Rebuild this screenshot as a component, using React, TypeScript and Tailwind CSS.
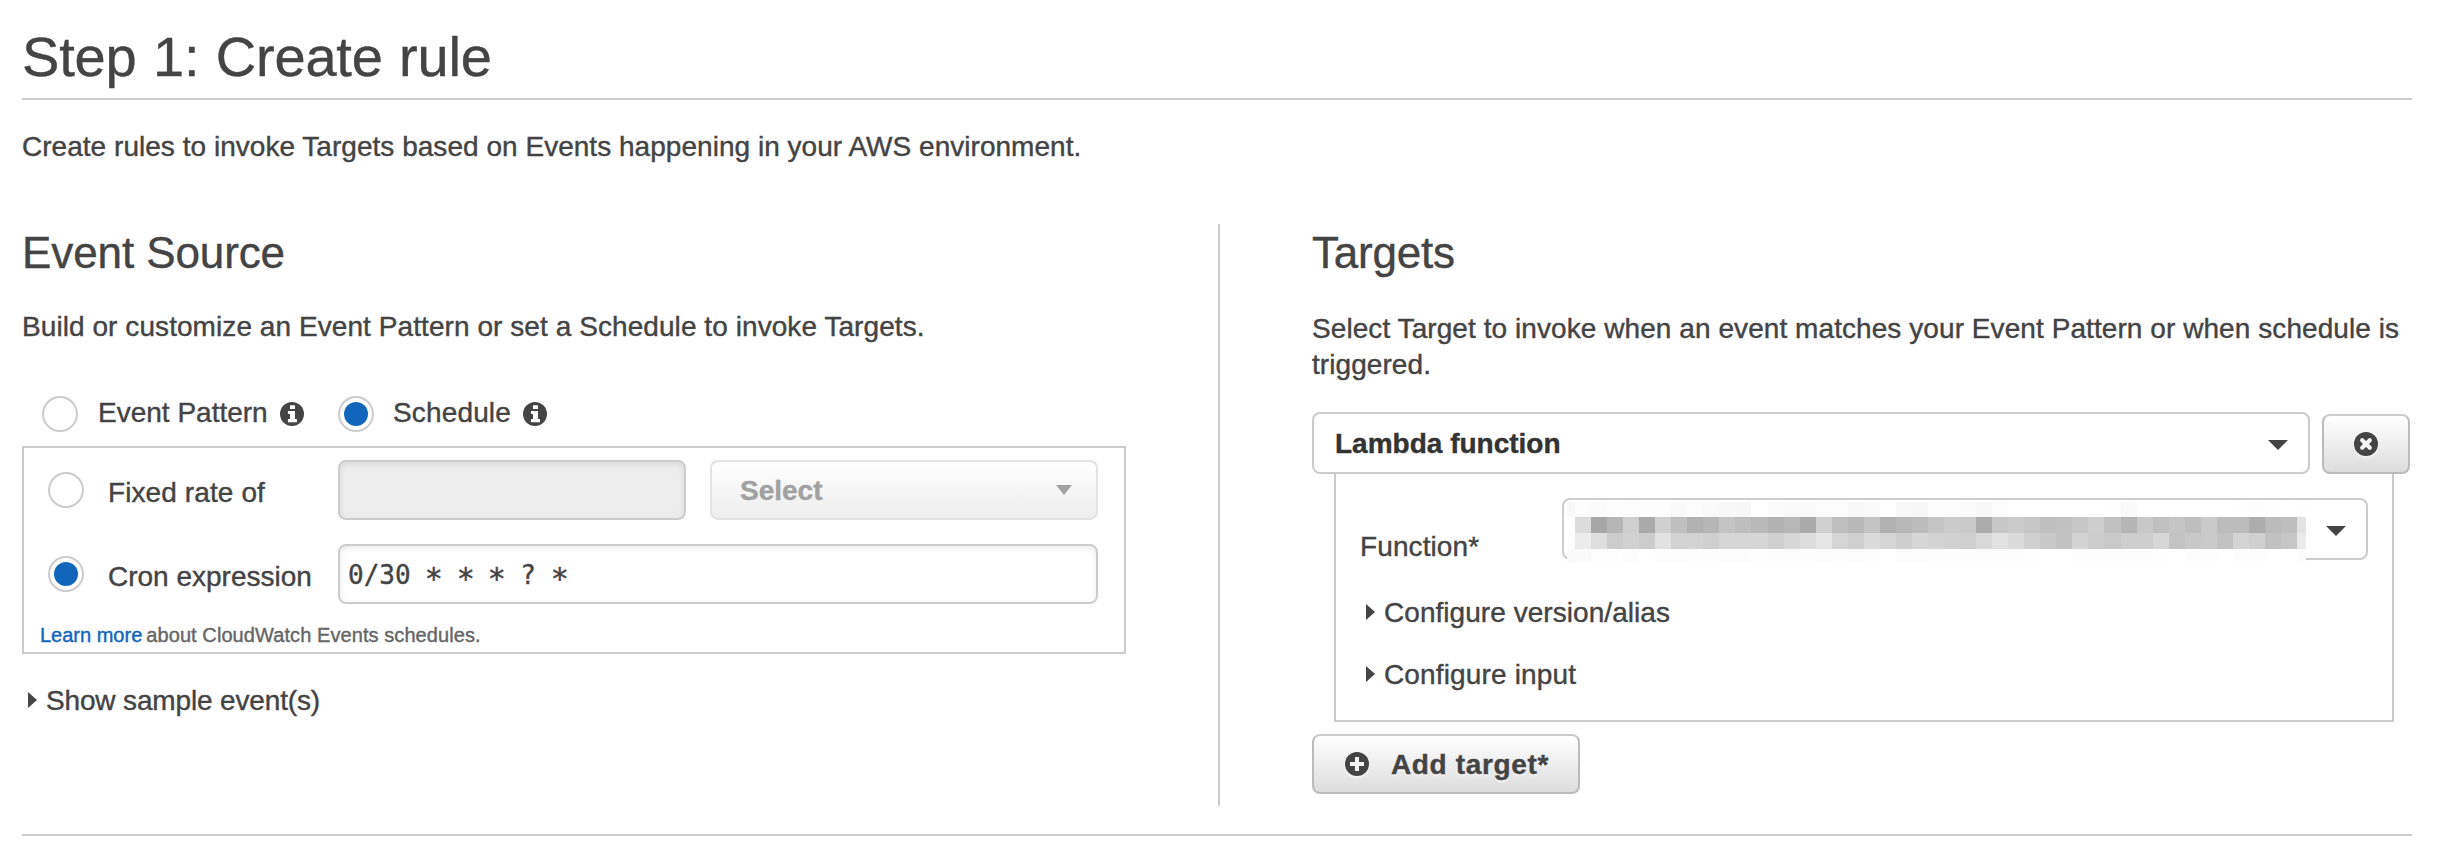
import { type ReactNode } from "react";

const MASK_ROWS = [
  { y: 0, h: 15, edge: ["f8", "fe"], cells: "fd fb fd fc fd fd f9 fc fa f8 f7 ff fb f9 f9 fc fc f8 f9 ff f8 f7 fd fd fb f8 fc ff ff ff ff ff ff fe fa ff ff ff ff ff ff fe fd fe ff" },
  { y: 15, h: 16, edge: ["ff", "e3"], cells: "db a7 b6 cf aa d0 bf b2 b6 c4 be b9 b2 b7 aa d0 bf b8 c4 b1 b7 bc c5 cb c9 ab c7 cb c6 bf c1 c7 ce c1 b5 c8 c0 c5 be ca bc bc ad bb be" },
  { y: 31, h: 16, edge: ["fc", "ea"], cells: "ec de cc d1 cc e2 d2 d2 cf d6 d6 d6 d0 d7 dd e6 d5 cf da d5 ce d6 d2 d1 cf d8 e1 da d0 c8 c2 d3 cd c9 ce ce d7 c3 c8 ca c2 d4 d0 c1 c6" },
  { y: 47, h: 13, edge: ["f9", "fc"], cells: "fa fe fe fc ff fc fc fd fd fc fc fe fd fd fd fc fd fc fd ff fc fc fd fd fd fd fd fd fe ff ff fd fd fd fd fd fe ff fd fd ff fd fd ff ff" },
];
const CELL = 722 / 45;

function MaskedValue() {
  return (
    <svg className="absolute left-[3px] top-[2px]" width="739" height="60" viewBox="0 0 739 60" shapeRendering="crispEdges">
      {MASK_ROWS.map((r) => (
        <g key={r.y}>
          <rect x={0} y={r.y} width={8} height={r.h} fill={`#${r.edge[0].repeat(3)}`} />
          {r.cells.split(" ").map((c, i) => (
            <rect key={i} x={8 + i * CELL} y={r.y} width={CELL} height={r.h} fill={`#${c.repeat(3)}`} />
          ))}
          <rect x={730} y={r.y} width={9} height={r.h} fill={`#${r.edge[1].repeat(3)}`} />
        </g>
      ))}
    </svg>
  );
}

function InfoIcon() {
  return (
    <svg width="24" height="24" viewBox="0 0 24 24" className="mb-px shrink-0">
      <circle cx="12" cy="12" r="12" fill="#444" />
      <path fill="#fff" d="M10.5 3.3h4a.5.5 0 0 1 .5.5v2.7a.5.5 0 0 1-.5.5h-4a.5.5 0 0 1-.5-.5V3.8a.5.5 0 0 1 .5-.5zM8.4 9h6.100a.5.5 0 0 1 .5.5V17h1.500a.5.5 0 0 1 .5.5v2.200a.5.5 0 0 1-.5.5H8.400a.5.5 0 0 1-.5-.5V17.500a.5.5 0 0 1 .5-.5H10v-5H8.400a.5.5 0 0 1-.5-.5v-2a.5.5 0 0 1 .5-.5z" />
    </svg>
  );
}

function Radio({ checked = false }: { checked?: boolean }) {
  return (
    <span className="flex h-9 w-9 shrink-0 items-center justify-center rounded-full border-2 border-[#ccc] bg-white">
      {checked && <span className="h-6 w-6 rounded-full bg-[#1166bb]" />}
    </span>
  );
}

function DownArrow({ small = false }: { small?: boolean }) {
  return small ? (
    <svg width="16" height="10" viewBox="0 0 16 10"><path d="M0 0h16L8 10z" fill="#a1a1a1" /></svg>
  ) : (
    <svg width="20" height="10" viewBox="0 0 20 10"><path d="M0 0h20L10 10z" fill="#444" /></svg>
  );
}

function Expander({ children, className = "" }: { children: ReactNode; className?: string }) {
  return (
    <div className={`flex h-9 items-center gap-[9px] leading-9 ${className}`}>
      <svg width="9" height="16" viewBox="0 0 9 16"><path d="M0 0l9 8-9 8z" fill="#444" /></svg>
      <span className="pt-[2px]">{children}</span>
    </div>
  );
}

export default function App() {
  return (
    <div className="h-[856px] w-[2442px] overflow-hidden bg-white pl-[22px] pr-[30px] font-['Liberation_Sans',Arial,sans-serif] text-[28px] leading-9 text-[#444] [-webkit-text-stroke:0.4px]">
      <h1 className="border-b-2 border-[#ccc] pb-[9px] pt-[25px] text-[56px] leading-[64px] tracking-[-0.17px] [word-spacing:1px]">Step 1: Create rule</h1>
      <p className="mt-[29px] tracking-[0.03px]">Create rules to invoke Targets based on Events happening in your AWS environment.</p>

      <div className="mt-[59px] flex h-[582px]">
        <section className="w-[1198px] shrink-0 border-r-2 border-[#ccc] pt-1">
          <h2 className="text-[44px] leading-[50px] tracking-[-0.1px]">Event Source</h2>
          <p className="mt-[31px] tracking-[0.07px]">Build or customize an Event Pattern or set a Schedule to invoke Targets.</p>

          <div className="mt-[51px] flex h-9 items-center pl-5">
            <Radio />
            <span className="ml-5 w-[182px] whitespace-nowrap pb-[2px]">Event Pattern</span>
            <InfoIcon />
            <span className="w-[34px]" />
            <Radio checked />
            <span className="ml-[19px] w-[130px] whitespace-nowrap pb-[2px] tracking-[0.15px]">Schedule</span>
            <InfoIcon />
          </div>

          <div className="mt-[14px] h-[208px] w-[1104px] border-2 border-[#ccc] pl-6 pt-3">
            <div className="flex h-[60px] items-center">
              <Radio />
              <span className="ml-6 w-[230px] whitespace-nowrap pt-[6px] tracking-[0.1px]">Fixed rate of</span>
              <div className="h-[60px] w-[348px] rounded-lg border-2 border-[#ccc] bg-[#ededed] shadow-[inset_0_2px_6px_rgba(0,0,0,0.09)]" />
              <div className="ml-6 flex h-[60px] w-[388px] items-center justify-between rounded-lg border-2 border-[#e2e2e2] bg-gradient-to-b from-white to-[#ededed] pl-7 pr-6 font-bold text-[#a1a1a1]">
                <span className="pt-[2px]">Select</span>
                <DownArrow small />
              </div>
            </div>
            <div className="mt-6 flex h-[60px] items-center">
              <Radio checked />
              <span className="ml-6 w-[230px] whitespace-nowrap pt-[6px]">Cron expression</span>
              <div className="flex h-[60px] w-[760px] items-center whitespace-pre rounded-lg border-2 border-[#ccc] pl-2 pt-[2px] font-['DejaVu_Sans_Mono',monospace] text-[26px] shadow-[inset_0_2px_6px_rgba(0,0,0,0.09)]">
                {"0/30 * * * ? *".split("*").map((part, i) => (
                  <span key={i}>
                    {i > 0 && <span className="inline-block translate-y-[4px] scale-115">*</span>}
                    {part}
                  </span>
                ))}
              </div>
            </div>
            <p className="-ml-2 mt-[17px] text-[20px] leading-7 text-[#666]">
              <a className="text-[#1166bb]">Learn more</a>
              <span className="ml-1 tracking-[0.08px]">about CloudWatch Events schedules.</span>
            </p>
          </div>

          <Expander className="mt-7 pl-[6px] tracking-[-0.15px]">Show sample event(s)</Expander>
        </section>

        <section className="w-[1192px] shrink-0 pl-[92px] pt-1">
          <h2 className="text-[44px] leading-[50px] tracking-[-0.2px]">Targets</h2>
          <p className="mt-[33px] whitespace-nowrap tracking-[0.07px]">
            Select Target to invoke when an event matches your Event Pattern or when schedule is<br />triggered.
          </p>

          <div className="mt-[29px] flex h-[62px] items-end">
            <div className="flex h-[62px] w-[998px] items-center justify-between rounded-lg border-2 border-[#ccc] pl-[21px] pr-5 font-bold text-[#333]">
              <span className="pt-[2px]">Lambda function</span>
              <span className="pt-[3px]"><DownArrow /></span>
            </div>
            <button className="ml-3 flex h-[60px] w-[88px] items-center justify-center rounded-lg border-2 border-[#bbb] border-t-[#ccc] bg-gradient-to-b from-white to-[#ddd]">
              <svg width="24" height="24" viewBox="0 0 24 24" className="drop-shadow-[0_2px_1px_rgba(255,255,255,0.6)]">
                <circle cx="12" cy="12" r="12" fill="#444" />
                <path d="M8.200 8.200l7.600 7.600M15.800 8.200l-7.600 7.600" stroke="#f4f4f4" strokeWidth="4.2" strokeLinecap="round" />
              </svg>
            </button>
          </div>

          <div className="ml-[22px] h-[248px] w-[1060px] border-2 border-t-0 border-[#ccc] pl-6 pt-6">
            <div className="flex h-[62px]">
              <span className="mt-[31px] w-[202px] tracking-[0.1px]">Function*</span>
              <div className="relative flex h-[62px] w-[806px] items-center justify-end rounded-lg border-2 border-[#ccc] pr-5">
                <MaskedValue />
                <span className="pt-[3px]"><DownArrow /></span>
              </div>
            </div>
            <Expander className="mt-[34px] pl-[6px] tracking-[0.05px]">Configure version/alias</Expander>
            <Expander className="mt-[26px] pl-[6px] tracking-[0.15px]">Configure input</Expander>
          </div>

          <button className="mt-3 flex h-[60px] w-[268px] items-center rounded-lg border-2 border-[#bbb] border-t-[#ccc] bg-gradient-to-b from-white to-[#ddd] pl-[31px] font-bold">
            <svg width="24" height="24" viewBox="0 0 24 24" className="drop-shadow-[0_2px_1px_rgba(255,255,255,0.6)]">
              <circle cx="12" cy="12" r="12" fill="#444" />
              <path d="M12 5v14M5 12h14" stroke="#f2f2f2" strokeWidth="4" />
            </svg>
            <span className="ml-[22px] pt-px tracking-[0.65px] [text-shadow:0_2px_2px_rgba(255,255,255,0.6)]">Add target*</span>
          </button>
        </section>
      </div>

      <div className="mt-7 h-[2px] bg-[#ccc]" />
    </div>
  );
}
